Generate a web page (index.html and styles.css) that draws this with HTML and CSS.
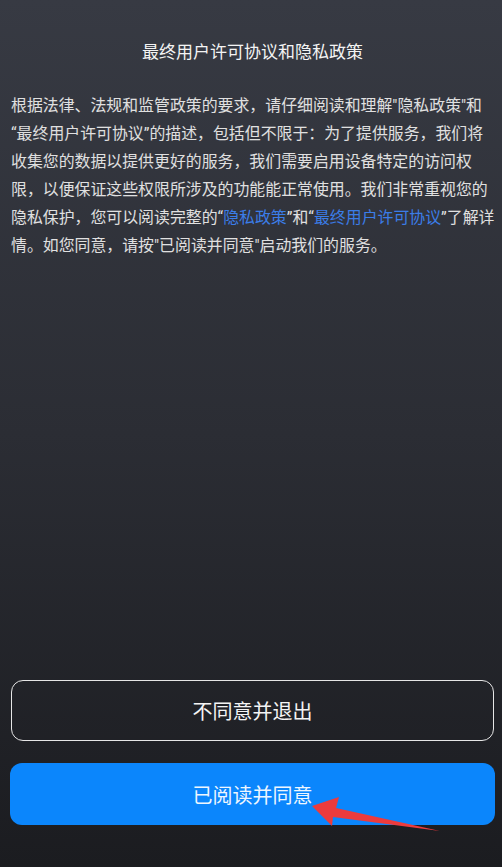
FILE: index.html
```html
<!DOCTYPE html>
<html lang="zh-CN">
<head>
  <meta charset="UTF-8" />
  <title>最终用户许可协议和隐私政策</title>
  <link rel="stylesheet" href="styles.css">
</head>
<body>
  <div class="page">
    <h1 class="titulo">最终用户许可协议和隐私政策</h1>
    <p class="texto">
      根据法律、法规和监管政策的要求，请仔细阅读和理解"隐私政策"和<br>
      “最终用户许可协议”的描述，包括但不限于：为了提供服务，我们将<br>
      收集您的数据以提供更好的服务，我们需要启用设备特定的访问权<br>
      限，以便保证这些权限所涉及的功能能正常使用。我们非常重视您的<br>
      隐私保护，您可以阅读完整的“<a href="#" class="link">隐私政策</a>”和“<a href="#" class="link">最终用户许可协议</a>”了解详<br>
      情。如您同意，请按"已阅读并同意"启动我们的服务。
    </p>

    <div class="botoes">
      <button class="btn btn-recusar">不同意并退出</button>
      <button class="btn btn-aceitar">已阅读并同意</button>
    </div>

    <svg class="seta" width="140" height="40" viewBox="0 0 140 40">
      <polygon points="2,10 29,1 26,12 130,35 23,21 22,30" fill="#ec3b3d"/>
    </svg>
  </div>
</body>
</html>
```

FILE: styles.css
```css
html, body {
  margin: 0;
  padding: 0;
}
body {
  font-family: Roboto, "Noto Sans CJK SC", sans-serif;
  background: linear-gradient(180deg, #373a43 0%, #2b2d34 50%, #1b1c20 100%);
  color: #e0e0e0;
}
.page {
  position: relative;
  height: 867px;
  display: flex;
  flex-direction: column;
  box-sizing: border-box;
  padding: 40px 7px 42px 10px;
}
.titulo {
  margin: 0;
  font-size: 17px;
  font-weight: normal;
  line-height: 24px;
  text-align: center;
  color: #f4f4f4;
}
.texto {
  margin: 28px 0 0 1px;
  font-size: 15.9px;
  line-height: 28px;
  white-space: nowrap;
}
.link {
  color: #3b7de8;
  text-decoration: none;
}
.botoes {
  margin-top: auto;
  display: flex;
  flex-direction: column;
  gap: 22px;
}
.btn {
  font-family: Roboto, "Noto Sans CJK SC", sans-serif;
  font-size: 20px;
  border-radius: 12px;
  cursor: pointer;
}
.btn-recusar {
  height: 61px;
  margin: 0 1px;
  background: transparent;
  color: #f4f4f4;
  border: 1.5px solid #e6e6e6;
}
.btn-aceitar {
  height: 62px;
  background-color: #0b86fc;
  color: #eef6ff;
  border: none;
}
.seta {
  position: absolute;
  left: 310px;
  top: 796px;
}
```
